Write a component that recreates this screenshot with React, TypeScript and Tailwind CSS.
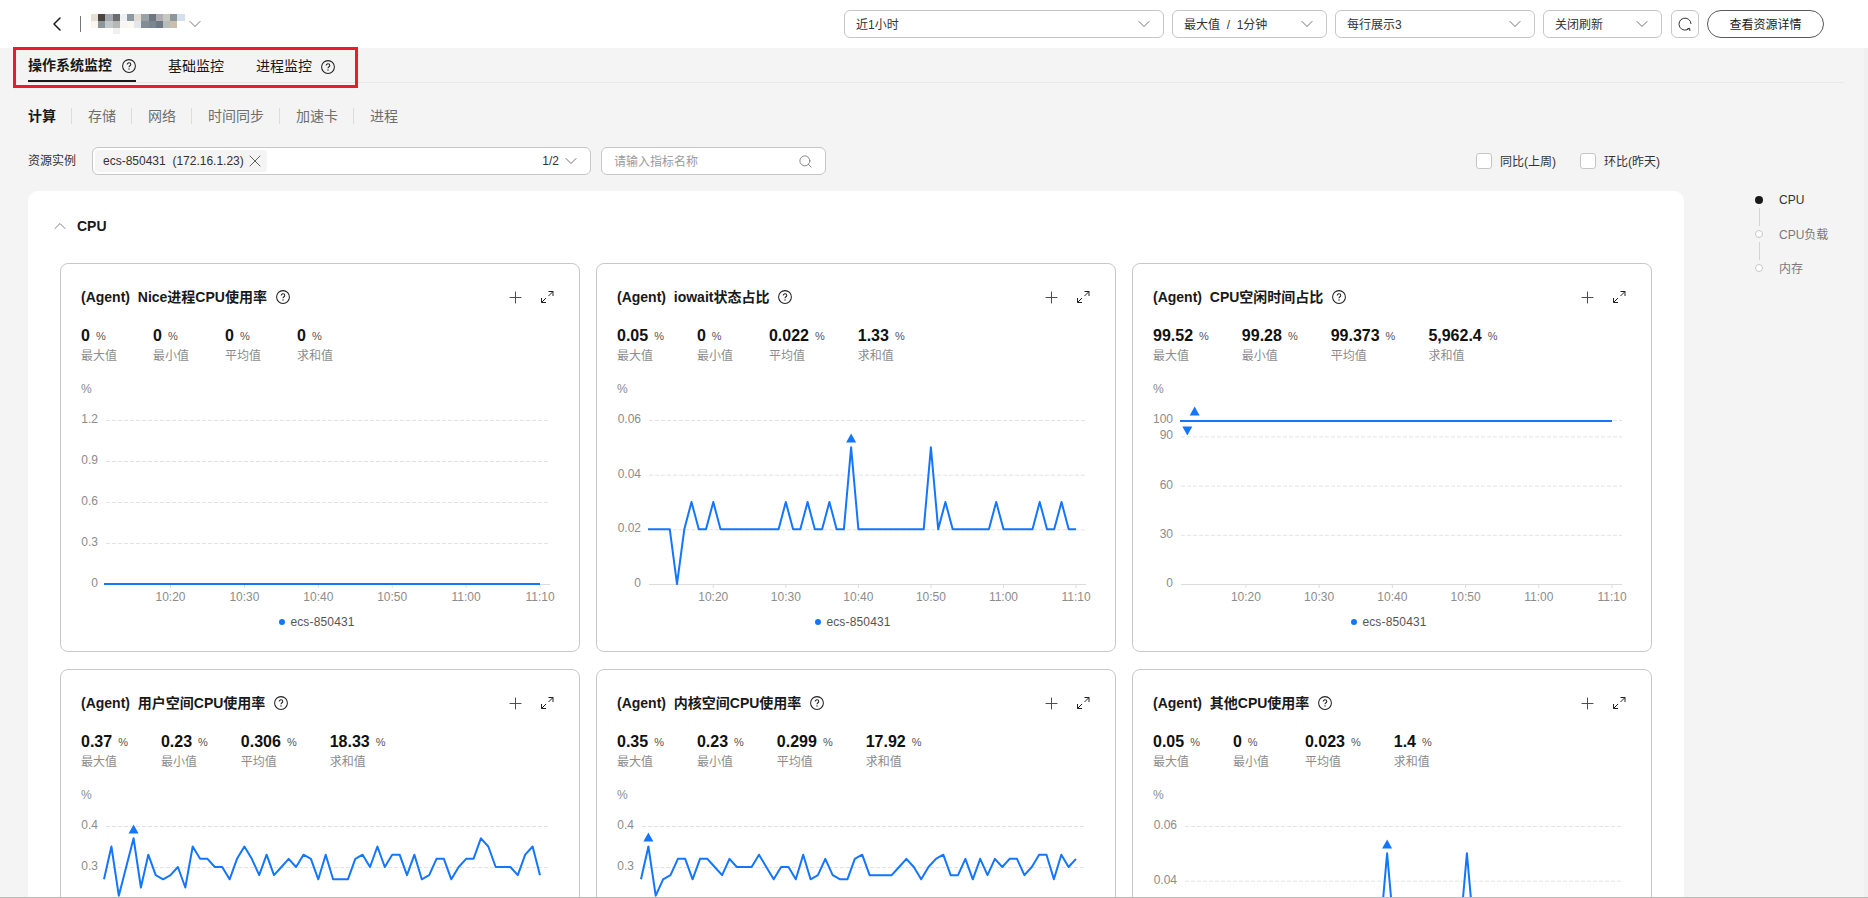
import React from "react";
import { ChevronDown, ChevronUp, ChevronLeft, Search, X, Plus } from "lucide-react";

const BLUE = "#1476ff";

function Help({ className = "" }: { className?: string }) {
  return (
    <svg viewBox="0 0 14 14" className={`w-[14px] h-[14px] shrink-0 ${className}`} fill="none" stroke="#222222">
      <circle cx="7" cy="7" r="6.4" strokeWidth="1.05" />
      <path d="M5.2 5.5c0-1 .8-1.7 1.8-1.7s1.8.7 1.8 1.6c0 1.3-1.8 1.4-1.8 2.8" strokeWidth="1.05" />
      <circle cx="7" cy="10" r=".65" fill="#222222" stroke="none" />
    </svg>
  );
}

function Expand() {
  return (
    <svg viewBox="0 0 14 14" className="w-[14px] h-[14px]" fill="none" stroke="#222222" strokeWidth="1">
      <path d="M8.5 1.5h4.5V6M13 1.5 8.5 6M1.5 8v4.5H6M1.5 12.5 6 8" />
    </svg>
  );
}

function Select({ w, label }: { w: string; label: string }) {
  return (
    <div className={`${w} h-[28px] bg-white border border-[#c6c6c6] rounded-[6px] flex items-center justify-between pl-[11px] pr-[9px] text-[12px] text-[#333333] whitespace-pre`}>
      <span className="pt-px">{label}</span>
      <ChevronDown className="w-[20px] h-[20px] text-[#666666]" strokeWidth={1.1} />
    </div>
  );
}

const MOSAIC = [
  ["#e8dfd4", "#4a433f", "#a3a9ae", "#6b6c70", "#eef1f4", "#8c98a2", "#e3dcd3", "#9aa2a8", "#70777e", "#b1aeb3", "#c6c8c3", "#8e969b", "#d5e0ee"],
  ["#faf6ef", "#8d959d", "#c3c8cc", "#b5b7b7", "#f7f6f4", "#fbf8f2", "#e3e7ec", "#838d95", "#7a8690", "#6c7882", "#b8bcbb", "#cbbfab", "#ffffff"],
];

function Mosaic() {
  return (
    <svg viewBox="0 0 94 20" className="w-[94px] h-[20px] shrink-0" shapeRendering="crispEdges">
      {MOSAIC.map((row, r) =>
        row.map((c, i) => <rect key={`${r}-${i}`} x={i * 7.2} y={r * 7} width="7.3" height="7.1" fill={c} />)
      )}
      <rect x="21.6" y="14" width="7.3" height="6" fill="#f1f1f1" />
    </svg>
  );
}

type Chart = {
  start: number;
  grid: number;
  ticks: { label: string; y: number }[];
  data: number[] | null;
  markers: { idx: number; y: number; up: boolean }[];
  cut?: boolean;
};

function ChartSvg({ start, grid, ticks, data, markers, cut }: Chart) {
  const step = (480 - start) / 59;
  const X = (i: number) => start + i * step - 1;
  const times = ["10:20", "10:30", "10:40", "10:50", "11:00", "11:10"];
  return (
    <svg className="block w-[518px] h-[245px] -ml-[20px]" viewBox="0 0 518 245">
      <text x="20" y="29" className="fill-[#8c8c8c] text-[12px]">%</text>
      {ticks.map((t) => (
        <g key={t.label}>
          {(!cut || t.y < 120) && (
            <text x={grid - 9} y={t.y + 3} textAnchor="end" className="fill-[#8c8c8c] text-[12px]">{t.label}</text>
          )}
          {t.y < 220 && <line x1={grid - 1} x2="489" y1={t.y + 0.5} y2={t.y + 0.5} stroke="#e3e3e3" strokeDasharray="4 2" />}
        </g>
      ))}
      <line x1={grid - 1} x2="489" y1="220.5" y2="220.5" stroke="#dcdcdc" />
      {!cut &&
        times.map((t, i) => {
          const x = X(9 + i * 10);
          return (
            <g key={t}>
              <line x1={x} x2={x} y1="220" y2="224" stroke="#dcdcdc" />
              <text x={x} y="237" textAnchor="middle" className="fill-[#8c8c8c] text-[12px]">{t}</text>
            </g>
          );
        })}
      {data && (
        <polyline
          points={data.map((y, i) => `${X(i).toFixed(1)},${y.toFixed(1)}`).join(" ")}
          fill="none"
          stroke={BLUE}
          strokeWidth="2"
          strokeLinejoin="round"
        />
      )}
      {data &&
        markers.map((m) => (
          <polygon
            key={m.idx}
            points={
              m.up
                ? `${X(m.idx) - 5},${m.y + 4.5} ${X(m.idx) + 5},${m.y + 4.5} ${X(m.idx)},${m.y - 4.5}`
                : `${X(m.idx) - 5},${m.y - 4.5} ${X(m.idx) + 5},${m.y - 4.5} ${X(m.idx)},${m.y + 4.5}`
            }
            fill={BLUE}
          />
        ))}
    </svg>
  );
}

function Card({ name, stats, chart }: { name: string; stats: string[]; chart: Chart }) {
  const labels = ["最大值", "最小值", "平均值", "求和值"];
  return (
    <div className="h-[389px] border border-[#c8c8c8] rounded-[8px] bg-white px-[20px] pt-[23px] overflow-hidden">
      <div className="h-[20px] flex items-center justify-between text-[14px] text-[#191919]">
        <div className="flex items-center">
          <span className="font-semibold whitespace-pre">{`(Agent)  ${name}`}</span>
          <Help className="ml-[9px]" />
        </div>
        <div className="flex items-center gap-[15px] pr-[5px]">
          <Plus className="w-[19px] h-[19px] text-[#444444]" strokeWidth={1.2} />
          <Expand />
        </div>
      </div>
      <div className="mt-[19px] flex gap-[33px]">
        {stats.map((v, i) => (
          <div key={i} className="min-w-[39px]">
            <div className="h-[20px] flex items-center whitespace-nowrap">
              <span className="text-[16px] font-bold text-[#111111]">{v}</span>
              <span className="ml-[6px] text-[11px] text-[#555555] mt-[1px]">%</span>
            </div>
            <div className="h-[18px] pt-px flex items-center text-[12px] text-[#8c8c8c]">{labels[i]}</div>
          </div>
        ))}
      </div>
      <ChartSvg {...chart} />
      {!chart.cut && (
        <div className="h-[26px] pr-[6px] flex items-center justify-center gap-[5px] text-[12px] text-[#555555]">
          <span className="w-[6px] h-[6px] rounded-full bg-[#1476ff]" />
          <span className="tracking-[0.15px]">ecs-850431</span>
        </div>
      )}
    </div>
  );
}

const toY = (max: number) => (v: number) => 220 - (164 * v) / max;
const scale = (labels: string[]) =>
  labels.map((label, i) => ({ label, y: 56 + (164 * i) / (labels.length - 1) }));

const spike = (over: Record<number, number>) =>
  Array.from({ length: 60 }, (_, i) => (over[i] !== undefined ? over[i] : 0.02));

const iowait = spike({ 4: 0, 6: 0.03, 9: 0.03, 19: 0.03, 22: 0.03, 25: 0.03, 28: 0.05, 39: 0.05, 41: 0.03, 48: 0.03, 54: 0.03, 57: 0.03 });

const idle = Array.from({ length: 60 }, (_, i) => ([0, 7, 8, 23, 24, 53, 54, 57].includes(i) ? 99.3 : 99.4));

const user = [0.27,0.35,0.23,0.3,0.37,0.25,0.33,0.28,0.27,0.28,0.3,0.25,0.35,0.32,0.32,0.3,0.3,0.27,0.32,0.35,0.32,0.28,0.33,0.28,0.3,0.32,0.3,0.33,0.32,0.27,0.33,0.27,0.27,0.27,0.32,0.33,0.3,0.35,0.3,0.33,0.33,0.28,0.33,0.27,0.28,0.32,0.32,0.27,0.3,0.32,0.32,0.37,0.35,0.3,0.3,0.3,0.28,0.33,0.35,0.28];

const kernel = [0.27,0.35,0.23,0.27,0.28,0.32,0.32,0.27,0.32,0.32,0.3,0.28,0.32,0.3,0.3,0.3,0.33,0.3,0.27,0.3,0.3,0.27,0.33,0.27,0.28,0.32,0.28,0.27,0.27,0.32,0.33,0.28,0.28,0.28,0.28,0.3,0.32,0.3,0.27,0.3,0.32,0.33,0.28,0.28,0.32,0.27,0.32,0.28,0.32,0.3,0.32,0.32,0.28,0.3,0.33,0.33,0.27,0.33,0.3,0.32];

const other = spike({ 6: 0.03, 19: 0.03, 28: 0.05, 39: 0.05, 48: 0.03, 57: 0.03 });

const cards: { name: string; stats: string[]; chart: Chart }[] = [
  {
    name: "Nice进程CPU使用率",
    stats: ["0", "0", "0", "0"],
    chart: {
      start: 44,
      grid: 46,
      ticks: scale(["1.2", "0.9", "0.6", "0.3", "0"]),
      data: Array.from({ length: 60 }, () => 220),
      markers: [],
    },
  },
  {
    name: "iowait状态占比",
    stats: ["0.05", "0", "0.022", "1.33"],
    chart: {
      start: 52,
      grid: 53,
      ticks: scale(["0.06", "0.04", "0.02", "0"]),
      data: iowait.map(toY(0.06)),
      markers: [{ idx: 28, y: 74, up: true }],
    },
  },
  {
    name: "CPU空闲时间占比",
    stats: ["99.52", "99.28", "99.373", "5,962.4"],
    chart: {
      start: 48,
      grid: 49,
      ticks: [
        { label: "100", y: 56 },
        { label: "90", y: 72.4 },
        { label: "60", y: 121.6 },
        { label: "30", y: 170.8 },
        { label: "0", y: 220 },
      ],
      data: idle.map(toY(100)),
      markers: [
        { idx: 2, y: 47, up: true },
        { idx: 1, y: 67, up: false },
      ],
    },
  },
  {
    name: "用户空间CPU使用率",
    stats: ["0.37", "0.23", "0.306", "18.33"],
    chart: {
      start: 44,
      grid: 46,
      ticks: scale(["0.4", "0.3", "0.2", "0.1", "0"]),
      data: user.map(toY(0.4)),
      markers: [{ idx: 4, y: 59, up: true }],
      cut: true,
    },
  },
  {
    name: "内核空间CPU使用率",
    stats: ["0.35", "0.23", "0.299", "17.92"],
    chart: {
      start: 45,
      grid: 46,
      ticks: scale(["0.4", "0.3", "0.2", "0.1", "0"]),
      data: kernel.map(toY(0.4)),
      markers: [{ idx: 1, y: 67, up: true }],
      cut: true,
    },
  },
  {
    name: "其他CPU使用率",
    stats: ["0.05", "0", "0.023", "1.4"],
    chart: {
      start: 52,
      grid: 53,
      ticks: scale(["0.06", "0.04", "0.02", "0"]),
      data: other.map(toY(0.06)),
      markers: [{ idx: 28, y: 74, up: true }],
      cut: true,
    },
  },
];

function SubTabs() {
  const items = ["计算", "存储", "网络", "时间同步", "加速卡", "进程"];
  return (
    <div className="mt-[22px] ml-[28px] h-[22px] flex items-center text-[14px]">
      {items.map((t, i) => (
        <React.Fragment key={t}>
          {i > 0 && <span className="w-px h-[16px] bg-[#dcdcdc] ml-[15px] mr-[16px]" />}
          <span className={i === 0 ? "font-semibold text-[#191919]" : "text-[#6e6e6e]"}>{t}</span>
        </React.Fragment>
      ))}
    </div>
  );
}

function Check({ label }: { label: string }) {
  return (
    <div className="flex items-center gap-[8px] text-[12px] text-[#333333]">
      <span className="w-[16px] h-[16px] bg-white border border-[#c6c6c6] rounded-[3px]" />
      <span className="pt-px">{label}</span>
    </div>
  );
}

function Nav() {
  const items = ["CPU", "CPU负载", "内存"];
  return (
    <div className="ml-[71px] mt-[5px] text-[12px]">
      {items.map((t, i) => (
        <div key={t} className="flex gap-[16px] h-[34px]">
          <div className="w-[8px] flex flex-col items-center">
            <span className={i === 0 ? "w-[8px] h-[8px] rounded-full bg-[#191919]" : "w-[8px] h-[8px] rounded-full border border-[#c8c8c8] bg-white"} />
            {i < 2 && <span className="w-px h-[18px] mt-[4px] bg-[#d4d4d4]" />}
          </div>
          <span className={`h-[16px] leading-[16px] ${i === 0 ? "-mt-[4px] text-[#333333]" : "-mt-[3px] text-[#7a7a7a]"}`}>{t}</span>
        </div>
      ))}
    </div>
  );
}

export default function App() {
  return (
    <div className="relative h-[898px] w-full overflow-hidden bg-[#f4f4f4] border-b border-[#b9bdb5] font-['Liberation_Sans','Noto_Sans_CJK_SC',sans-serif]">
      <header className="h-[48px] bg-white flex items-center justify-between pl-[45px] pr-[44px]">
        <div className="flex items-center">
          <ChevronLeft className="w-[24px] h-[24px] text-[#191919]" strokeWidth={1.5} />
          <span className="w-px h-[16px] bg-[#777777] ml-[11px] mr-[10px]" />
          <Mosaic />
          <ChevronDown className="w-[20px] h-[20px] text-[#666666]" strokeWidth={1.1} />
        </div>
        <div className="flex items-center gap-[8px]">
          <Select w="w-[320px]" label="近1小时" />
          <Select w="w-[155px]" label="最大值  /  1分钟" />
          <Select w="w-[200px]" label="每行展示3" />
          <Select w="w-[119px]" label="关闭刷新" />
          <div className="w-[28px] h-[28px] ml-px bg-white border border-[#c6c6c6] rounded-[6px] flex items-center justify-center">
            <svg viewBox="0 0 14 14" className="w-[14px] h-[14px]" fill="none" stroke="#333333" strokeWidth="1">
              <path d="M11.3 11.3A6 6 0 1 1 13 7M9.4 11.6h2.4V14" />
            </svg>
          </div>
          <div className="w-[117px] h-[28px] bg-white border border-[#595959] rounded-full flex items-center justify-center pt-px text-[12px] text-[#191919]">
            查看资源详情
          </div>
        </div>
      </header>

      <div className="absolute left-[13px] top-[47px] w-[345px] h-[41px] border-[3px] border-[#ed1c24] pointer-events-none" />

      <div className="border-r-[4px] border-[#f0f0f0] h-full">
        <div className="ml-[28px] mr-[20px] h-[35px] border-b border-[#e8e8e8] flex items-stretch text-[14px] text-[#191919]">
          <div className="flex items-center gap-[10px] border-b-2 border-[#191919] h-[34px] pt-[3px] font-semibold">
            <span>操作系统监控</span>
            <Help />
          </div>
          <div className="flex items-center ml-[32px] h-[34px] pt-[3px]">基础监控</div>
          <div className="flex items-center gap-[9px] ml-[32px] h-[34px] pt-[3px]">
            <span>进程监控</span>
            <Help />
          </div>
        </div>

        <SubTabs />

        <div className="mt-[20px] ml-[28px] w-[1632px] flex items-center justify-between">
          <div className="flex items-center">
            <span className="text-[12px] text-[#333333] w-[64px]">资源实例</span>
            <div className="w-[499px] h-[28px] bg-white border border-[#c6c6c6] rounded-[6px] flex items-center justify-between pl-[2px] pr-[9px] text-[12px] text-[#333333]">
              <div className="w-[172px] h-[22px] bg-[#f4f4f4] rounded-[4px] flex items-center justify-between pl-[8px] pr-[2px] whitespace-pre">
                <span>{"ecs-850431  (172.16.1.23)"}</span>
                <X className="w-[20px] h-[20px] text-[#555555]" strokeWidth={1.1} />
              </div>
              <div className="flex items-center gap-[2px]">
                <span>1/2</span>
                <ChevronDown className="w-[20px] h-[20px] text-[#666666]" strokeWidth={1.1} />
              </div>
            </div>
            <div className="w-[225px] h-[28px] ml-[10px] bg-white border border-[#c6c6c6] rounded-[6px] flex items-center justify-between pl-[12px] pr-[12px] text-[12px] text-[#9a9a9a]">
              <span className="pt-px">请输入指标名称</span>
              <Search className="w-[15px] h-[15px] text-[#666666]" strokeWidth={1.2} />
            </div>
          </div>
          <div className="flex items-center gap-[24px]">
            <Check label="同比(上周)" />
            <Check label="环比(昨天)" />
          </div>
        </div>

        <div className="mt-[16px] flex items-start">
          <main className="ml-[28px] w-[1656px] bg-white rounded-[10px] px-[32px] shrink-0">
            <div className="h-[72px] flex items-center gap-[7px] pb-[2px] -ml-[10px] text-[14px] font-bold text-[#191919]">
              <ChevronUp className="w-[20px] h-[20px] text-[#777777]" strokeWidth={1.1} />
              <span>CPU</span>
            </div>
            <div className="grid grid-cols-3 gap-x-[16px] gap-y-[17px]">
              {cards.map((c) => (
                <Card key={c.name} {...c} />
              ))}
            </div>
          </main>
          <Nav />
        </div>
      </div>
    </div>
  );
}
